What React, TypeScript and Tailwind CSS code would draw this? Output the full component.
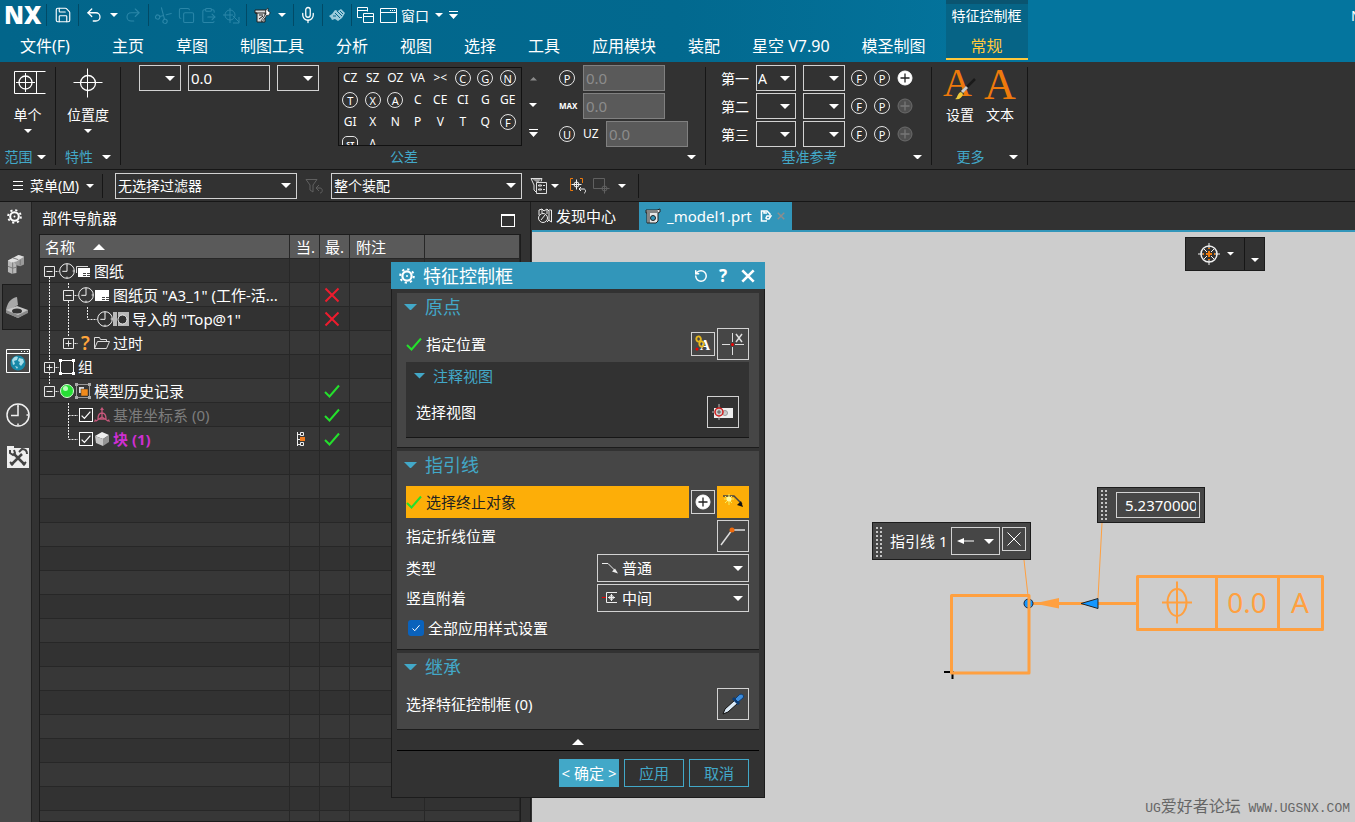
import React from 'react';
import clsx from 'clsx';
import { ClipboardPaste, Copy, Mic, Redo2, RotateCcw, Save, Scissors, Undo2 } from 'lucide-react';

function Caret({ width = 'w-2', className, up = false }: { width?: string; className?: string; up?: boolean }) {
  return (
    <svg viewBox="0 0 10 5" className={clsx('shrink-0', width, className)} fill="currentColor" aria-hidden="true">
      <path d={up ? 'M0 5h10L5 0z' : 'M0 0h10L5 5z'} />
    </svg>
  );
}

function OverflowCaret() {
  return (
    <svg viewBox="0 0 9 8" className="w-[9px] shrink-0" fill="currentColor" aria-hidden="true">
      <path d="M0 0h9v1H0zM0 3h9L4.500 8z" />
    </svg>
  );
}

function Gear({ className }: { className: string }) {
  return (
    <svg viewBox="0 0 16 16" className={className} fill="none" stroke="currentColor" aria-hidden="true">
      <circle cx="8" cy="8" r="4.600" strokeWidth="2.200" />
      <circle cx="8" cy="8" r="6.800" strokeWidth="2" strokeDasharray="2.300 3.040" />
      <circle cx="8" cy="8" r="1" fill="currentColor" stroke="none" />
    </svg>
  );
}

function Check({ className = 'size-4 text-[#24e02c]' }: { className?: string }) {
  return (
    <svg viewBox="0 0 16 16" className={clsx('shrink-0', className)} fill="none" stroke="currentColor" strokeWidth="2" aria-hidden="true">
      <path d="M1 9l4.500 4.500L15 2.500" />
    </svg>
  );
}

function Cross({ className }: { className: string }) {
  return (
    <svg viewBox="0 0 16 16" className={className} fill="none" stroke="currentColor" aria-hidden="true">
      <path d="M1.500 1.500l13 13M14.500 1.500l-13 13" />
    </svg>
  );
}

function Clock({ className = 'size-4' }: { className?: string }) {
  return (
    <svg viewBox="0 0 24 24" className={clsx('shrink-0', className)} fill="none" stroke="#f0f0f0" strokeWidth="1.500" aria-hidden="true">
      <circle cx="12" cy="12" r="11" />
      <path d="M12 3v9.500H5" />
      <path d="M12 20.500v2M20.500 12h2M12 1.500v2" />
    </svg>
  );
}

function PositionSymbol({ className }: { className: string }) {
  return (
    <svg viewBox="0 0 30 30" className={className} fill="none" stroke="white" aria-hidden="true">
      <circle cx="15" cy="15" r="7.500" strokeWidth="1.300" />
      <path d="M14.500 .5v29M.5 14.500h29" />
    </svg>
  );
}

function PlusCircle({ disabled = false }: { disabled?: boolean }) {
  return (
    <svg viewBox="0 0 16 16" className="size-4 shrink-0" aria-hidden="true">
      <circle cx="8" cy="8" r="7" fill={disabled ? '#505050' : '#fff'} stroke={disabled ? '#6b6b6b' : '#fff'} />
      <path d="M8 3.500v9M3.500 8h9" stroke={disabled ? '#777' : '#222'} strokeWidth="1.300" />
    </svg>
  );
}

function Ring({ children, small = false }: { children: string; small?: boolean }) {
  return (
    <span
      className={clsx(
        'flex size-4 shrink-0 items-center justify-center border border-[#e4e4e4] leading-none',
        small ? 'rounded-[5px] text-[7px] font-bold' : 'rounded-full text-[11px]',
      )}
    >
      {children}
    </span>
  );
}

type PickerProps = {
  label: string;
  value?: string;
  className: string;
  icon?: React.ReactNode;
  pad?: string;
};

function Picker({ label, value = '', className, icon, pad = 'pl-[2px]' }: PickerProps) {
  return (
    <div className={clsx('relative shrink-0', className)}>
      <select
        aria-label={label}
        className={clsx('size-full appearance-none overflow-hidden border border-[#d2d2d2] bg-transparent pr-4 text-white outline-none', pad)}
      >
        <option>{value}</option>
      </select>
      {icon && <span className="pointer-events-none absolute inset-y-0 left-1 flex items-center">{icon}</span>}
      <span className="pointer-events-none absolute inset-y-0 right-[6px] flex items-center">
        <Caret width="w-[10px]" />
      </span>
    </div>
  );
}

/* ---------- Title bar ---------- */

function QuickGroup({ className, children }: { className: string; children: React.ReactNode }) {
  return (
    <div className={clsx('flex h-[22px] items-center justify-evenly border-r border-[#014a66]', className)}>{children}</div>
  );
}

function IconButton({ label, className, children }: { label: string; className?: string; children: React.ReactNode }) {
  return (
    <button type="button" aria-label={label} className={clsx('flex shrink-0 items-center justify-center', className)}>
      {children}
    </button>
  );
}

function QuickAccess() {
  return (
    <div className="flex h-[30px] items-center pl-1">
      <span className="w-[42px] font-['Open_Sans'] text-[24px] leading-6 font-extrabold">NX</span>
      <div className="h-[22px] w-px bg-[#014a66]" />
      <QuickGroup className="w-8">
        <IconButton label="保存">
          <Save className="size-[18px]" strokeWidth={1.5} />
        </IconButton>
      </QuickGroup>
      <QuickGroup className="w-[70px]">
        <IconButton label="撤消">
          <Undo2 className="size-[18px]" strokeWidth={1.7} />
        </IconButton>
        <Caret />
        <IconButton label="重做" className="text-[#2a86a8]">
          <Redo2 className="size-[18px]" strokeWidth={1.5} />
        </IconButton>
      </QuickGroup>
      <QuickGroup className="w-[98px] text-[#2a86a8]">
        <IconButton label="剪切">
          <Scissors className="size-[17px] rotate-[-60deg]" strokeWidth={1.5} />
        </IconButton>
        <IconButton label="复制">
          <Copy className="size-[17px]" strokeWidth={1.5} />
        </IconButton>
        <IconButton label="粘贴">
          <ClipboardPaste className="size-[17px]" strokeWidth={1.5} />
        </IconButton>
        <IconButton label="重复命令">
          <svg viewBox="0 0 17 17" className="size-[17px]" fill="none" stroke="currentColor">
            <circle cx="7" cy="8" r="5" />
            <path d="M7 1v15M0 8h10M10 9l6 6M16 10v6h-6" />
          </svg>
        </IconButton>
      </QuickGroup>
      <QuickGroup className="w-[47px]">
        <IconButton label="工具">
          <svg viewBox="0 0 17 17" className="size-[17px]">
            <path d="M1 3h11v3h-1v9H3V6H1z" fill="#ddd" stroke="#222" />
            <path d="M1 6h10M5 8h4M5 12l4-3" stroke="#222" />
            <path d="M7 14l5-7c-1-3 0-5 2-6v3l2 1c0 3-2 4-3 3l-5 7z" fill="#fff" stroke="#222" strokeWidth=".8" />
          </svg>
        </IconButton>
        <Caret />
      </QuickGroup>
      <QuickGroup className="w-[29px]">
        <IconButton label="语音">
          <Mic className="size-[18px]" strokeWidth={1.7} />
        </IconButton>
      </QuickGroup>
      <QuickGroup className="w-[29px]">
        <IconButton label="触控模式">
          <svg viewBox="0 0 17 14" className="w-[17px]">
            <path d="M0 8l3-2 3-4 3 1 3-2 4 4-3 5-4 3-3-2-3 1-1-2z" fill="#9ccbdc" />
            <path d="M8 3l5 5M11 3l3 3M6 5l5 5M4 8h3" stroke="#02678c" fill="none" />
          </svg>
        </IconButton>
      </QuickGroup>
      <div className="flex items-center gap-[6px] pl-[5px]">
        <IconButton label="层叠窗口">
          <svg viewBox="0 0 17 17" className="size-[17px]" fill="none" stroke="white">
            <path d="M5 10.500H.5V.5h10v4M.5 3.500h10" />
            <path d="M6.500 6.500h10v9h-10zM6.500 9.500h10" />
          </svg>
        </IconButton>
        <button type="button" className="flex items-center gap-1 text-[14px]">
          <svg viewBox="0 0 17 17" className="size-[17px]" fill="none" stroke="white">
            <path d="M.5 1.500h16v14H.5zM.5 5.500h16" />
            <path d="M10 3.500h1M12 3.500h1M14 3.500h1" />
          </svg>
          窗口
        </button>
        <Caret />
        <OverflowCaret />
      </div>
    </div>
  );
}

const tabs = ['主页', '草图', '制图工具', '分析', '视图', '选择', '工具', '应用模块', '装配', '星空 V7.90', '模圣制图'];

function TitleBar() {
  return (
    <header className="flex h-[62px] shrink-0 bg-linear-to-r from-[#02658a] from-0% via-[#02698f] via-50% to-[#04759e] to-75% text-white">
      <div className="shrink-0 pr-5">
        <QuickAccess />
        <nav className="flex h-[31px] items-center gap-8 pl-5 text-[16px] leading-6 whitespace-nowrap">
          <a href="#file" className="mr-[10px]">文件(F)</a>
          {tabs.map((tab) => (
            <a key={tab} href={`#${tab}`}>{tab}</a>
          ))}
        </nav>
      </div>
      <div className="flex h-[60px] w-[82px] shrink-0 flex-col items-center border-t-4 border-b-2 border-t-[#0a5470] border-b-[#ffc83c] bg-[#066486]">
        <span className="h-[30px] text-[14px] leading-6">特征控制框</span>
        <a href="#general" className="text-[16px] leading-6 text-[#ffc83c]">常规</a>
      </div>
      <span className="ml-auto w-1 overflow-hidden text-[14px] leading-[31px]">N</span>
    </header>
  );
}

/* ---------- Ribbon ---------- */

function RibbonGroup({ title, className, children }: { title: string; className: string; children: React.ReactNode }) {
  return (
    <section className={clsx('flex h-[98px] shrink-0 flex-col border-r border-[#161616]', className)}>
      <div className="h-[84px]">{children}</div>
      <div className="flex h-4 shrink-0 items-center text-[14px] leading-4">
        <h2 className="flex-1 text-center text-[#42a8c8]">{title}</h2>
        <Caret width="w-[9px]" className="mr-[9px]" />
      </div>
    </section>
  );
}

const symbols = [
  'CZ', 'SZ', 'OZ', 'VA', '><', '(C)', '(G)', '(N)',
  '(T)', '(X)', '(A)', 'C', 'CE', 'CI', 'G', 'GE',
  'GI', 'X', 'N', 'P', 'V', 'T', 'Q', '(F)',
  '(ST)', 'Λ',
];

function SymbolGallery() {
  return (
    <div className="grid h-[79px] w-[184px] shrink-0 auto-rows-[22px] grid-cols-8 overflow-hidden border border-[#111] pr-[2px] text-[12px]">
      {symbols.map((s) => (
        <button key={s} type="button" className="flex items-center justify-center pb-[2px] leading-none">
          {s.startsWith('(') ? <Ring small={s === '(ST)'}>{s.slice(1, -1)}</Ring> : s}
        </button>
      ))}
    </div>
  );
}

function ToleranceInput({ label }: { label: string }) {
  return (
    <input
      aria-label={label}
      disabled
      defaultValue="0.0"
      className="h-[26px] w-[82px] border border-[#808080] bg-[#5a5a5a] px-[2px] text-[15px] text-[#8c8c8c]"
    />
  );
}

const datums = [
  { label: '第一', value: 'A', active: true },
  { label: '第二', value: '', active: false },
  { label: '第三', value: '', active: false },
];

function Ribbon() {
  return (
    <div className="flex h-[108px] shrink-0 border-b border-[#161616] pt-[5px] text-[14px]">
      <RibbonGroup title="范围" className="w-14">
        <button type="button" className="flex w-full flex-col items-center pt-1 leading-5">
          <svg viewBox="0 0 32 24" className="ml-1 w-8" fill="none" stroke="white">
            <path d="M31.500 .5H.5v22h31M22.500 .5v22" />
            <circle cx="11.500" cy="11.500" r="6.500" strokeWidth="1.300" />
            <path d="M11.500 2v19M2 11.500h19" />
          </svg>
          <span className="mt-[10px]">单个</span>
          <Caret className="mt-1" />
        </button>
      </RibbonGroup>
      <RibbonGroup title="特性" className="w-[65px]">
        <button type="button" className="flex w-full flex-col items-center pt-px leading-5">
          <PositionSymbol className="size-[30px]" />
          <span className="mt-[7px]">位置度</span>
          <Caret className="mt-1" />
        </button>
      </RibbonGroup>
      <RibbonGroup title="公差" className="w-[585px]">
        <div className="flex items-start pl-[18px]">
          <Picker label="直径符号" className="-mt-[2px] h-[26px] w-[42px]" />
          <input
            aria-label="公差值"
            defaultValue="0.0"
            className="-mt-[2px] ml-[7px] h-[26px] w-[82px] border border-[#d2d2d2] bg-transparent px-[2px] text-[15px]"
          />
          <Picker label="材料修饰符" className="-mt-[2px] ml-[7px] h-[26px] w-[42px]" />
          <div className="ml-[19px] flex">
            <SymbolGallery />
            <div className="flex w-[22px] flex-col items-center justify-between pt-[10px] pb-[9px]">
              <Caret up width="w-[7px]" className="text-[#8a8a8a]" />
              <Caret />
              <OverflowCaret />
            </div>
          </div>
          <div className="-mt-[2px] ml-[15px] flex flex-col gap-[2px]">
            <div className="flex items-center gap-2">
              <Ring>P</Ring>
              <ToleranceInput label="投影公差" />
            </div>
            <div className="flex items-center gap-2">
              <span className="w-4 text-[8px] font-bold">MAX</span>
              <ToleranceInput label="最大公差" />
            </div>
            <div className="flex items-center gap-2">
              <Ring>U</Ring>
              <span className="w-[15px] text-[12px]">UZ</span>
              <ToleranceInput label="偏置公差" />
            </div>
          </div>
        </div>
      </RibbonGroup>
      <RibbonGroup title="基准参考" className="w-[226px]">
        <div className="-mt-[2px] flex flex-col gap-[2px] pl-[15px]">
          {datums.map((d) => (
            <div key={d.label} className="flex items-center gap-[7px] text-[14px]">
              <span>{d.label}</span>
              <Picker label={d.label} value={d.value} className="h-[26px] w-10" pad="pl-px" />
              <Picker label={`${d.label}修饰符`} className="mr-[-1px] h-[26px] w-[42px]" />
              <Ring>F</Ring>
              <Ring>P</Ring>
              <IconButton label="添加修饰符">
                <PlusCircle disabled={!d.active} />
              </IconButton>
            </div>
          ))}
        </div>
      </RibbonGroup>
      <RibbonGroup title="更多" className="w-24">
        <div className="flex gap-2 pt-px pl-3 leading-5">
          <button type="button" className="flex w-8 flex-col items-center">
            <svg viewBox="0 0 32 32" className="size-8 overflow-visible">
              <text x="-1" y="28" fontSize="40" fill="#ee7a0c" fontFamily="Liberation Serif">A</text>
              <path d="M20 22L31 11" stroke="#1a1a1a" strokeWidth="2.500" />
              <path d="M18 24l5-5" stroke="#ccc" strokeWidth="3" />
              <path d="M11 31c3-1 2-6 6-7l2 2c-1 4-4 6-8 5z" fill="#ecc93c" />
            </svg>
            <span className="mt-[5px]">设置</span>
          </button>
          <button type="button" className="flex w-8 flex-col items-center">
            <svg viewBox="0 0 32 32" className="size-8 overflow-visible">
              <text x="0" y="31" fontSize="44" fill="#ee7a0c" fontFamily="Liberation Serif">A</text>
            </svg>
            <span className="mt-[5px]">文本</span>
          </button>
        </div>
      </RibbonGroup>
    </div>
  );
}

function SelectionBar() {
  return (
    <div className="flex h-8 shrink-0 items-center border-b border-[#161616] pl-[13px] text-[14px]">
      <button type="button" className="flex w-[81px] shrink-0 items-center justify-between">
        <svg viewBox="0 0 10 10" className="w-[10px] shrink-0" stroke="white">
          <path d="M0 .5h10M0 4.500h10M0 8.500h10" />
        </svg>
        <span className="leading-5 whitespace-nowrap">
          菜单(<u>M</u>)
        </span>
        <Caret />
      </button>
      <div className="mr-3 ml-2 h-6 w-px bg-[#161616]" />
      <Picker label="类型过滤器" value="无选择过滤器" className="h-[26px] w-[182px]" />
      <svg viewBox="0 0 18 16" className="mx-2 w-[18px] shrink-0 text-[#606060]" fill="none" stroke="currentColor">
        <path d="M1 1.500h11L8 7v7l-3-2V7zM11 10h4c3 0 3 5 0 5M11 10l3-3M11 10l3 3" />
      </svg>
      <Picker label="选择范围" value="整个装配" className="h-[26px] w-[191px]" />
      <IconButton label="过滤器选项" className="ml-2">
        <svg viewBox="0 0 17 17" className="size-[17px]" fill="none" stroke="#ddd">
          <path d="M1 1.500h11l-1 3M1 1.500L4 8v5l2 2" />
          <path d="M2 2h9L8 6z" fill="#999" stroke="none" />
          <path d="M6.500 5.500h10v11h-10zM8.500 9h3v-1h-3zM8.500 13h3v-1h-3zM13 8.500h2M13 12.500h2" />
        </svg>
      </IconButton>
      <Caret className="ml-1" />
      <IconButton label="捕捉点" className="ml-[10px]">
        <svg viewBox="0 0 17 17" className="size-[17px]" fill="none" stroke="#f0f0f0">
          <path d="M4 1.500H1.500v12H4M11 1.500h2.500V6" stroke="#ee7a0c" />
          <circle cx="7.500" cy="7.500" r="2.500" />
          <path d="M7.500 2.500v10M2.500 7.500h10M10 12h5c2 0 2 4 0 4M10 12l2-2M10 12l2 2" />
        </svg>
      </IconButton>
      <svg viewBox="0 0 17 17" className="ml-[7px] w-[17px] shrink-0 text-[#606060]" fill="none" stroke="currentColor">
        <path d="M7 11.500H.5V1.500h11V7" />
        <circle cx="11.500" cy="11.500" r="2.500" />
        <path d="M11.500 7v9.500M7 11.500h9.500" />
      </svg>
      <Caret className="ml-2" />
      <div className="ml-3 h-6 w-px bg-[#161616]" />
    </div>
  );
}

/* ---------- Resource rail ---------- */

function ResourceRail() {
  return (
    <aside className="flex w-8 shrink-0 flex-col border-r border-[#222] bg-[#484848]">
      <IconButton label="资源条选项" className="h-7 pr-[2px]">
        <Gear className="size-[15px]" />
      </IconButton>
      <IconButton label="装配导航器" className="mt-[14px] h-10">
        <svg viewBox="0 0 18 22" className="w-[17px]">
          <path d="M1 7l4-2 5 1v14l-5 1-4-2z" fill="#b8b8b8" />
          <path d="M5 5l8-4 5 2v8l-4 2-4-1z" fill="#9a9a9a" />
          <path d="M1 7l11-6 6 2-8 5-5 1z" fill="#e0e0e0" />
          <path d="M6 9v12M1 13l5 2 4-1M14 6v6M6 4l6 2" stroke="#777" fill="none" />
        </svg>
      </IconButton>
      <IconButton label="部件导航器" className="ml-[2px] h-[46px] border-y border-l border-[#1c1c1c] bg-[#323232]">
        <svg viewBox="0 0 24 23" className="w-6">
          <path d="M1 14C2 7 6 2 12 1l1 8-9 5z" fill="#a8a8a8" />
          <path d="M1 14l11-4 11 4v2l-10 6L2 17z" fill="#c6c6c6" />
          <path d="M1 14l12 5 10-5v3l-10 5-12-5z" fill="#8a8a8a" />
          <ellipse cx="12" cy="15" rx="5" ry="2.500" fill="#333" />
        </svg>
      </IconButton>
      <IconButton label="Web 浏览器" className="h-[62px] pl-1">
        <svg viewBox="0 0 24 24" className="size-6">
          <path d="M.5 .5h23v23H.5zM.5 4.500h23" fill="none" stroke="white" />
          <path d="M15 2.500h1M18 2.500h1M21 2.500h1" stroke="white" />
          <circle cx="12" cy="14" r="7.500" fill="#1789a8" />
          <path d="M6 11c2-4 5-4 6-3l-1 3-3 1 1 3-2 1zM13 9l4 1 1 3-3 4-2-2 1-2-2-1zM9 17l3 1-1 2z" fill="#a9dce8" />
        </svg>
      </IconButton>
      <IconButton label="历史记录" className="h-[46px] pl-1">
        <Clock className="size-6" />
      </IconButton>
      <IconButton label="角色" className="h-[38px] pl-1">
        <svg viewBox="0 0 22 22" className="size-[22px]">
          <path d="M0 0h7v2h15v20H0z" fill="#eee" />
          <path d="M4 19L15 8M7 8l11 11" stroke="#444" strokeWidth="2.500" />
          <path d="M3 4v3l3 2 2-2-1-3M12 6l3-3c3 0 5 2 5 5M3 16l3 3M16 19l3-3" stroke="#444" strokeWidth="2" fill="none" />
        </svg>
      </IconButton>
    </aside>
  );
}

/* ---------- Part navigator ---------- */

type Expander = 'plus' | 'minus' | 'leaf';

function Branch({ level, node, above = true, below = false, rails = [] }: {
  level: number; node: Expander; above?: boolean; below?: boolean; rails?: number[];
}) {
  const x = 9.5 + level * 19;
  const width = 19 * (level + 1);
  const gap = node === 'leaf' ? 0 : 6;
  return (
    <svg width={width} height="24" viewBox={`0 0 ${width} 24`} className="shrink-0" fill="none" stroke="#e8e8e8" aria-hidden="true">
      <g strokeDasharray="2 1">
        {rails.map((r) => (
          <path key={r} d={`M${9.5 + r * 19} 0v24`} />
        ))}
        {above && <path d={`M${x} 0v${12 - gap}`} />}
        {below && <path d={`M${x} ${12 + gap}V24`} />}
        <path d={`M${x + gap} 12.500H${width}`} />
      </g>
      {node !== 'leaf' && <path d={`M${x - 5} 7.500h10v10h-10zM${x - 3} 12.500h6`} />}
      {node === 'plus' && <path d={`M${x} 9.500v6`} />}
    </svg>
  );
}

function Sheet({ stacked = false }: { stacked?: boolean }) {
  return (
    <svg viewBox="0 0 16 16" className="size-4 shrink-0" aria-hidden="true">
      {stacked && <path d="M1.500 10V3.500H13" fill="none" stroke="#ddd" />}
      <path d={stacked ? 'M3 5h12v9H3z' : 'M1 3h14v11H1z'} fill="#fff" />
      <path d="M8 10.500h3M12 10.500h3M8 12.500h3M12 12.500h3" stroke="#444" />
    </svg>
  );
}

function TreeCheckbox({ label }: { label: string }) {
  return (
    <span className="relative mx-px size-[14px] shrink-0">
      <input type="checkbox" defaultChecked aria-label={label} className="block size-full appearance-none border border-white" />
      <Check className="pointer-events-none absolute inset-[2px] size-[10px] text-white" />
    </span>
  );
}

function ImportedView() {
  return (
    <svg viewBox="0 0 16 16" className="size-4 shrink-0" aria-hidden="true">
      <path d="M0 1h4v14H0zM5 1h11v14H5z" fill="#b8b8b8" />
      <circle cx="9.500" cy="8.500" r="4.500" fill="#333" stroke="#eee" />
    </svg>
  );
}

function Folder() {
  return (
    <svg viewBox="0 0 17 16" className="w-[17px] shrink-0" fill="none" stroke="#ddd" aria-hidden="true">
      <path d="M1.500 13.500v-11h5l1 2h6v2M1.500 13.500l3-7h12l-3 7z" />
    </svg>
  );
}

function GroupFrame() {
  return (
    <svg viewBox="0 0 16 16" className="size-4 shrink-0" fill="none" stroke="#fff" aria-hidden="true">
      <path d="M1.500 1.500h13v13h-13z" />
      <path d="M0 0h3v3H0zM13 0h3v3h-3zM0 13h3v3H0zM13 13h3v3h-3z" fill="#fff" stroke="none" />
    </svg>
  );
}

function HistoryIcons() {
  return (
    <>
      <svg viewBox="0 0 16 16" className="size-4 shrink-0" aria-hidden="true">
        <circle cx="8" cy="8" r="6.500" fill="#27df35" stroke="#d8ffd8" />
        <circle cx="6.500" cy="5.500" r="2.500" fill="#b8ffbb" />
      </svg>
      <svg viewBox="0 0 16 16" className="size-4 shrink-0" aria-hidden="true">
        <path d="M1.500 1.500h13v13h-13z" fill="none" stroke="#999" />
        <path d="M0 0h3v3H0zM13 0h3v3h-3zM0 13h3v3H0zM13 13h3v3h-3z" fill="#aaa" />
        <path d="M4 4h5v6H4z" fill="#ddd" />
        <path d="M6 6h7v7H6z" fill="#f08a1c" stroke="#333" strokeWidth=".5" />
      </svg>
    </>
  );
}

function Csys() {
  return (
    <svg viewBox="0 0 16 16" className="size-4 shrink-0" fill="none" stroke="#c8587c" strokeWidth="1.300" aria-hidden="true">
      <path d="M8 2v8M8 10l-6 4M8 10l6 4M4 12c0-4 2-6 4-6s4 2 4 6z" />
      <path d="M8 0l2 3H6zM0 15l1-3 2 2zM16 15l-1-3-2 2z" fill="#c8587c" stroke="none" />
    </svg>
  );
}

function Cube() {
  return (
    <svg viewBox="0 0 16 16" className="size-4 shrink-0" aria-hidden="true">
      <path d="M1 5l7-4 7 3-6 4z" fill="#eee" />
      <path d="M1 5l8 3v7l-7-3z" fill="#c4c4c4" />
      <path d="M9 8l6-4v7l-6 4z" fill="#949494" />
    </svg>
  );
}

type TreeRow = { lead: React.ReactNode; text: string; tone?: string; mark?: 'ok' | 'bad'; current?: boolean };

const treeRows: TreeRow[] = [
  { lead: <><Branch level={0} node="minus" above={false} below /><Clock /><Sheet stacked /></>, text: '图纸' },
  { lead: <><Branch level={1} node="minus" below rails={[0]} /><Clock /><Sheet /></>, text: '图纸页 "A3_1" (工作-活...', mark: 'bad' },
  { lead: <><Branch level={2} node="leaf" rails={[0, 1]} /><Clock /><ImportedView /></>, text: '导入的 "Top@1"', mark: 'bad' },
  {
    lead: (
      <>
        <Branch level={1} node="plus" rails={[0]} />
        <span className="w-[15px] text-center text-[19px] font-semibold text-[#ffa53c]">?</span>
        <Folder />
      </>
    ),
    text: '过时',
  },
  { lead: <><Branch level={0} node="plus" below /><GroupFrame /></>, text: '组' },
  { lead: <><Branch level={0} node="minus" /><HistoryIcons /></>, text: '模型历史记录', mark: 'ok' },
  { lead: <><Branch level={1} node="leaf" below /><TreeCheckbox label="基准坐标系" /><Csys /></>, text: '基准坐标系 (0)', tone: 'text-[#7d7d7d]', mark: 'ok' },
  { lead: <><Branch level={1} node="leaf" /><TreeCheckbox label="块" /><Cube /></>, text: '块 (1)', tone: 'font-bold text-[#cf2fd2]', mark: 'ok', current: true },
];

const emptyRows = Array.from({ length: 18 }, (_, i) => i);

function PartNavigator() {
  const cell = 'h-6 border-r border-b border-[#272727] p-0';
  const head = 'h-6 border-r border-b border-[#272727] p-0 text-left font-normal';
  return (
    <section className="flex w-[499px] shrink-0 flex-col overflow-hidden border-r border-[#1c1c1c] pr-[9px] pl-[7px]">
      <div className="flex h-8 shrink-0 items-center justify-between pr-[6px] pl-[3px]">
        <h2 className="text-[15px] leading-5">部件导航器</h2>
        <button type="button" aria-label="最大化" className="mt-1 h-[13px] w-[14px] border border-t-2 border-white" />
      </div>
      <div className="min-h-0 flex-1 overflow-hidden border border-[#1c1c1c]">
        <table className="w-full table-fixed border-separate border-spacing-0 text-[15px] leading-5">
          <colgroup>
            <col className="w-[250px]" />
            <col className="w-[30px]" />
            <col className="w-[30px]" />
            <col className="w-[75px]" />
            <col />
          </colgroup>
          <thead className="bg-[#5a5a5a]">
            <tr>
              <th className={head}>
                <span className="flex items-center gap-[18px] pl-[5px]">
                  名称 <Caret up width="w-3" />
                </span>
              </th>
              <th className={clsx(head, 'pl-[6px]')}>当.</th>
              <th className={clsx(head, 'pl-[5px]')}>最.</th>
              <th className={clsx(head, 'pl-[6px]')}>附注</th>
              <th className={head} />
            </tr>
          </thead>
          <tbody>
            {treeRows.map((row) => (
              <tr key={row.text} className="odd:bg-[#323232] even:bg-[#373737]">
                <td className={cell}>
                  <div className="flex h-[23px] items-center">
                    {row.lead}
                    <span className={clsx('ml-[3px] whitespace-nowrap', row.tone)}>{row.text}</span>
                  </div>
                </td>
                <td className={cell}>
                  {row.current && (
                    <svg viewBox="0 0 10 16" className="ml-[6px] w-[10px]" fill="none" stroke="#eee">
                      <path d="M1.500 1v14M1.500 3.500h3M1.500 8.500h3M1.500 13.500h3M4.500 1.500h3v3h-3zM4.500 11.500h3v3h-3z" />
                      <path d="M4 6h5v4H4z" fill="#f07a1c" stroke="none" />
                    </svg>
                  )}
                </td>
                <td className={cell}>
                  <span className="flex justify-center pr-[6px]">
                    {row.mark === 'ok' && <Check />}
                    {row.mark === 'bad' && <Cross className="size-4 stroke-2 text-[#ee1c2e]" />}
                  </span>
                </td>
                <td className={cell} />
                <td className={cell} />
              </tr>
            ))}
            {emptyRows.map((i) => (
              <tr key={i} className="odd:bg-[#323232] even:bg-[#373737]">
                <td className={cell} />
                <td className={cell} />
                <td className={cell} />
                <td className={cell} />
                <td className={cell} />
              </tr>
            ))}
          </tbody>
        </table>
      </div>
    </section>
  );
}

/* ---------- Graphics window ---------- */

function Grip() {
  return (
    <svg viewBox="0 0 8 32" className="w-2 shrink-0" stroke="#c4c4c4" strokeWidth="2" strokeDasharray="2 2" aria-hidden="true">
      <path d="M2 0v32M6 0v32" />
    </svg>
  );
}

function Drawing() {
  return (
    <svg viewBox="0 0 823 590" className="absolute top-0 left-0 h-[590px] w-[823px]" fill="none" stroke="#ffa040" strokeWidth="3">
      <path d="M412 440h8M420.500 439v8" stroke="#000" strokeWidth="2" />
      <path d="M492 328l4 36M570 291l-4 75" strokeWidth="1" />
      <path d="M498 371.500h107" />
      <path d="M502 371.500l25-5.500v10.500z" fill="#ffa040" stroke="none" />
      <path d="M549 371.500l17-5v10z" fill="#1497ff" stroke="#222" strokeWidth="1" />
      <circle cx="496.500" cy="371.500" r="4.500" fill="#1497ff" stroke="#223" strokeWidth="1" />
      <path d="M419.500 363.500H497V441h-77.500z" strokeLinejoin="round" />
      <path d="M605.500 344.500H790.500v53H605.500zM684.500 344.500v53M746.500 344.500v53" strokeLinejoin="round" />
      <ellipse cx="645" cy="370.500" rx="9.500" ry="13.500" strokeWidth="2" />
      <path d="M645 349.500v42M630 370.500h30" strokeWidth="2" />
      <g fill="#ffa040" stroke="none" textAnchor="middle" fontFamily="'Noto Sans', sans-serif" fontSize="28">
        <text x="715" y="381">0.0</text>
        <text x="768" y="381">A</text>
      </g>
    </svg>
  );
}

function GraphicsWindow() {
  return (
    <main className="flex min-w-0 flex-1 flex-col pl-px">
      <div className="flex h-[30px] shrink-0 items-stretch border-b-2 border-[#3296ba] text-[15px] leading-[28px]">
        <a href="#discovery" className="flex w-[107px] shrink-0 items-center gap-[3px] pl-[5px]">
          <svg viewBox="0 0 16 16" className="size-4" fill="none" stroke="#eee">
            <path d="M2 7V2l3-1 2 2 3-2 2 2v9l-2 2M12 2h2.500v12l-3-2" />
            <circle cx="6" cy="10" r="4.500" />
            <path d="M4 12l4-5M5 1v4M10 2v4" />
          </svg>
          发现中心
        </a>
        <div className="flex w-[153px] shrink-0 items-center bg-[#3296ba] pl-[6px]">
          <svg viewBox="0 0 16 16" className="size-4">
            <path d="M1 2h11l3-1v3l-2 1v8l-2 2H2V5H1z" fill="#e8e8e8" stroke="#222" />
            <path d="M1 4h12M4 5v10" stroke="#222" />
            <circle cx="8" cy="10" r="2.500" fill="#3296ba" stroke="#222" />
          </svg>
          <span className="ml-[6px] w-[88px]">_model1.prt</span>
          <svg viewBox="0 0 12 12" className="ml-[5px] w-3" fill="none" stroke="white" strokeWidth="1.500">
            <path d="M7 11H1.500V1H7l3 3v1M4 1v2h3M6 8l1-2h4L9 9H7z" />
          </svg>
          <IconButton label="关闭标签" className="ml-[5px] text-[#8d8d8d]">
            <Cross className="size-2 stroke-3" />
          </IconButton>
        </div>
      </div>
      <div className="relative min-h-0 flex-1 overflow-hidden bg-[#cdcdcd]">
        <Drawing />

        <div className="absolute top-[5px] right-[90px] flex h-[34px] w-20 border border-[#1c1c1c] bg-[#323232]">
          <button type="button" aria-label="定向视图" className="flex flex-1 items-center gap-[6px] border-r border-[#161616] pl-[11px]">
            <svg viewBox="0 0 24 24" className="size-6" fill="none" stroke="#f0f0f0">
              <circle cx="12" cy="12" r="8" strokeWidth="1.500" />
              <path d="M12 1v5M12 18v5M1 12h5M18 12h5" />
              <path d="M12 9v6M9 12h6M12 6v1M12 17v1M6 12h1M17 12h1" stroke="#ee7a0c" strokeWidth="2" />
              <path d="M7 7l3 3M17 7l-3 3M7 17l3-3M17 17l-3-3" />
            </svg>
            <Caret width="w-[7px]" />
          </button>
          <button type="button" aria-label="更多视图选项" className="flex w-[19px] items-center justify-center pt-3">
            <Caret />
          </button>
        </div>

        {/* Leader toolbar */}
        <div className="absolute top-[290px] left-[340px] flex h-[38px] w-[159px] items-start border border-[#1c1c1c] bg-[#464646] p-[2px] pt-1 text-[15px]">
          <Grip />
          <span className="ml-[7px] w-[61px] leading-7 whitespace-nowrap">指引线 1</span>
          <Picker
            label="指引线箭头"
            className="h-7 w-[49px]"
            icon={
              <svg viewBox="0 0 17 6" className="ml-[2px] w-[17px]">
                <path d="M5 3h12" stroke="white" />
                <path d="M0 3l7-3v6z" fill="white" />
              </svg>
            }
          />
          <IconButton label="移除指引线" className="ml-[2px] size-6 border border-[#d2d2d2]">
            <Cross className="size-4" />
          </IconButton>
        </div>

        {/* Length input */}
        <div className="absolute top-[255px] left-[565px] flex h-9 w-[108px] items-start border border-[#1c1c1c] bg-[#464646] p-[2px]">
          <Grip />
          <input
            aria-label="长度"
            defaultValue="5.23700000"
            className="mt-[2px] ml-2 h-[26px] w-[84px] border border-[#d2d2d2] bg-transparent pr-[3px] pl-2 text-[15px]"
          />
        </div>

        <div className="absolute right-[5px] bottom-[3px] font-['Liberation_Mono','Noto_Sans_CJK_SC',monospace] text-[13px] leading-5 whitespace-nowrap text-[#666]">
          UG<span className="text-[16px]">爱好者论坛</span> WWW.UGSNX.COM
        </div>
      </div>
    </main>
  );
}

/* ---------- Feature control frame dialog ---------- */

function Section({ title, className, children }: { title: string; className?: string; children: React.ReactNode }) {
  return (
    <section className={clsx('mx-[5px] border-b border-[#1c1c1c] bg-[#464646] px-[9px]', className)}>
      <h3 className="-ml-[2px] flex h-7 items-center gap-2 text-[18px] leading-7 text-[#42a8c8]">
        <Caret width="w-[13px]" />
        {title}
      </h3>
      {children}
    </section>
  );
}

function ToolButton({ label, className = 'size-8', children }: { label: string; className?: string; children: React.ReactNode }) {
  return (
    <IconButton label={label} className={clsx('border border-[#d2d2d2]', className)}>
      {children}
    </IconButton>
  );
}

function FrameDialog() {
  return (
    <div role="dialog" aria-label="特征控制框" className="absolute top-[262px] left-[391px] w-[374px] bg-[#323232] text-[15px] leading-5 text-white">
      <div className="flex h-[27px] items-center bg-[#3296ba] pr-[10px] pl-2">
        <Gear className="size-4" />
        <h2 className="ml-2 flex-1 text-[18px] leading-6">特征控制框</h2>
        <IconButton label="重置">
          <RotateCcw className="size-[14px]" strokeWidth={2.5} />
        </IconButton>
        <IconButton label="帮助" className="mx-[10px] w-[10px] text-[17px] leading-5 font-bold">?</IconButton>
        <IconButton label="关闭" className="ml-[3px]">
          <Cross className="size-[14px] stroke-3" />
        </IconButton>
      </div>

      <div className="border border-t-0 border-[#1c1c1c] pt-1">
        <Section title="原点" className="pb-[9px]">
          <div className="mt-[7px] flex h-8 items-center gap-[2px] pr-px">
            <Check />
            <span className="flex-1 pl-[2px]">指定位置</span>
            <ToolButton label="关联原点" className="size-6">
              <svg viewBox="0 0 18 18" className="size-[18px]">
                <text x="6" y="15" fontSize="14" fontWeight="bold" fill="white" fontFamily="Liberation Serif">A</text>
                <path d="M3 2c3-2 5 2 3 4s-5-1-3-4zM6 7c3-2 5 2 3 4s-5-1-3-4z" fill="none" stroke="#e8b81c" strokeWidth="1.800" />
                <circle cx="3" cy="14" r="1.500" fill="#e00" />
              </svg>
            </ToolButton>
            <ToolButton label="指定位置">
              <svg viewBox="0 0 24 24" className="size-6" fill="none" stroke="#ddd">
                <path d="M11.500 1v9M11.500 15v8M1 12.500h8M14 12.500h9" />
                <path d="M15 2l6 8M21 2l-6 8" strokeWidth="1.500" />
                <circle cx="11.500" cy="12.500" r="1.500" fill="#e00" stroke="none" />
              </svg>
            </ToolButton>
          </div>
          <div className="mt-[2px] mr-px border-b border-[#161616] bg-[#323232] px-[10px] pb-[9px]">
            <h4 className="-ml-[2px] flex h-7 items-center gap-2 text-[#42a8c8]">
              <Caret width="w-[11px]" />
              注释视图
            </h4>
            <div className="mt-[6px] flex h-8 items-center justify-between">
              选择视图
              <ToolButton label="选择视图">
                <svg viewBox="0 0 24 18" className="w-6">
                  <path d="M3 5h19v10H3z" fill="#eee" />
                  <circle cx="14" cy="10" r="2.500" fill="#ccc" stroke="#999" />
                  <path d="M8 1v16M1 9h14" stroke="#bbb" />
                  <circle cx="8" cy="9" r="4" fill="#ccc" stroke="#d01c1c" strokeWidth="1.500" />
                  <path d="M6 9h4M8 7v4" stroke="#555" />
                </svg>
              </ToolButton>
            </div>
          </div>
        </Section>

        <Section title="指引线" className="mt-[3px] pb-[7px]">
          <div className="mt-[7px] flex h-8 items-center gap-[2px] pr-px">
            <div className="flex h-8 flex-1 items-center bg-[#fdae08] text-[#222]">
              <Check />
              <span className="pl-1">选择终止对象</span>
            </div>
            <ToolButton label="添加对象" className="size-6">
              <PlusCircle />
            </ToolButton>
            <IconButton label="选择终止对象" className="size-8 bg-[#fdae08]">
              <svg viewBox="0 0 24 18" className="w-6">
                <path d="M2 3h11l8 8" fill="none" stroke="#444" strokeWidth="1.500" />
                <path d="M22 14l-6-2 4-4z" fill="#111" />
                <path d="M8 1v11M3 6h10M4 3l7 7M11 3l-7 7" stroke="#f2ee5c" />
                <circle cx="8" cy="6" r="2.500" fill="#fff8a0" />
              </svg>
            </IconButton>
          </div>
          <div className="mt-[2px] flex h-8 items-center justify-between pr-px">
            指定折线位置
            <ToolButton label="指定折线位置">
              <svg viewBox="0 0 26 24" className="w-[26px]">
                <path d="M1 21L12 6h13" fill="none" stroke="#ddd" strokeWidth="1.500" />
                <circle cx="12" cy="6" r="2.500" fill="#ee6a0c" />
              </svg>
            </ToolButton>
          </div>
          <div className="mt-[2px] flex items-center justify-between pr-px">
            类型
            <Picker
              label="类型"
              value="普通"
              className="h-7 w-[152px]"
              pad="pl-6"
              icon={
                <svg viewBox="0 0 17 12" className="w-[17px]">
                  <path d="M1 1.500h6l7 7" fill="none" stroke="#eee" />
                  <path d="M17 11.500l-6-2 3-3z" fill="#eee" />
                </svg>
              }
            />
          </div>
          <div className="mt-[2px] flex items-center justify-between pr-px">
            竖直附着
            <Picker
              label="竖直附着"
              value="中间"
              className="h-7 w-[152px]"
              pad="pl-6"
              icon={
                <svg viewBox="0 0 16 12" className="ml-px w-4" fill="none" stroke="#eee">
                  <path d="M15 .5H4.500v10H15" />
                  <circle cx="9.500" cy="5.500" r="2" />
                  <path d="M9.500 2v7M6 5.500h7" />
                  <path d="M0 5.500h4" stroke="#e00" />
                </svg>
              }
            />
          </div>
          <label className="mt-[2px] flex h-7 items-center gap-1 pl-[2px]">
            <span className="relative size-4">
              <input type="checkbox" defaultChecked className="block size-full appearance-none rounded-[3px] bg-[#0a62bc]" />
              <Check className="pointer-events-none absolute inset-1 size-2 text-white" />
            </span>
            全部应用样式设置
          </label>
        </Section>

        <Section title="继承" className="mt-[3px] pb-[9px]">
          <div className="mt-[7px] flex h-8 items-center justify-between pr-px">
            选择特征控制框 (0)
            <ToolButton label="选择特征控制框">
              <svg viewBox="0 0 24 24" className="size-6">
                <path d="M2 22l2-5 10-9 3 3L7 20z" fill="#dceaf6" stroke="#111" />
                <path d="M12 6l6 6" stroke="#0c3c74" strokeWidth="3" />
                <path d="M14 7l4-4c2-2 6 0 4 3l-5 4z" fill="#3c8cdc" stroke="#0c3c74" />
              </svg>
            </ToolButton>
          </div>
        </Section>

        <div className="mx-[5px] flex h-[21px] items-center justify-center border-b border-black pt-[3px]">
          <Caret up width="w-3" />
        </div>
        <div className="flex justify-end gap-[5px] pt-2 pr-[15px] pb-[10px]">
          <button type="button" className="h-7 w-[60px] bg-[#42a8c8] whitespace-nowrap">
            &lt; 确定 &gt;
          </button>
          <button type="button" className="h-7 w-[60px] border border-[#42a8c8] text-[#42a8c8]">应用</button>
          <button type="button" className="h-7 w-[60px] border border-[#42a8c8] text-[#42a8c8]">取消</button>
        </div>
      </div>
    </div>
  );
}

export default function App() {
  return (
    <div className="relative flex h-screen flex-col overflow-hidden bg-[#323232] font-['Noto_Sans','Noto_Sans_CJK_SC',sans-serif] text-white">
      <TitleBar />
      <Ribbon />
      <SelectionBar />
      <div className="flex min-h-0 flex-1">
        <ResourceRail />
        <PartNavigator />
        <GraphicsWindow />
      </div>
      <FrameDialog />
    </div>
  );
}
